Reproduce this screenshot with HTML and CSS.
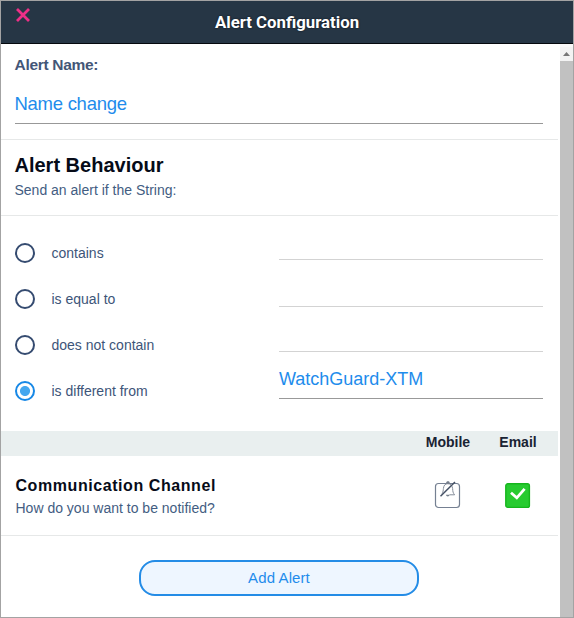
FILE: index.html
```html
<!DOCTYPE html>
<html lang="en">
<head>
<meta charset="utf-8">
<title>Alert Configuration</title>
<link rel="stylesheet" href="styles.css">
</head>
<body>
<div class="window">
  <header class="header">
    <svg class="close" width="14" height="14" viewBox="0 0 14 14"><path d="M1 1L13 13M13 1L1 13"/></svg>
    <h1 class="title">Alert Configuration</h1>
  </header>
  <div class="body">
    <main class="content">
      <section class="name">
        <div class="label">Alert Name:</div>
        <div class="field name-field">Name change</div>
      </section>
      <section class="behaviour">
        <h2 class="heading">Alert Behaviour</h2>
        <p class="sub">Send an alert if the String:</p>
      </section>
      <section class="options">
        <div class="option"><i class="radio"></i><span class="option-label">contains</span><div class="field option-field first"></div></div>
        <div class="option"><i class="radio"></i><span class="option-label">is equal to</span><div class="field option-field"></div></div>
        <div class="option"><i class="radio"></i><span class="option-label">does not contain</span><div class="field option-field short"></div></div>
        <div class="option"><i class="radio checked"></i><span class="option-label">is different from</span><div class="field option-field active">WatchGuard-XTM</div></div>
      </section>
      <div class="band"><span class="col">Mobile</span><span class="col">Email</span></div>
      <section class="channel">
        <div class="channel-text">
          <h3 class="channel-title">Communication Channel</h3>
          <p class="sub">How do you want to be notified?</p>
        </div>
        <svg class="mobile-box" width="28" height="30" viewBox="0 0 28 30">
          <rect class="box" x="1.5" y="4.5" width="24" height="24" rx="3"/>
          <path class="bell" d="M8 14.5C9.3 13 9.2 11 9.4 9.5C9.8 6.2 11.2 4.7 13.8 4.7S18.3 6.5 18.6 9.5C18.8 12.5 19 14 20.6 15.8H15.5"/>
          <path class="dot" d="M11.8 4.6Q12.2 2 14 2T16 4.6ZM11.8 15.8H15.8Q15.2 17.6 13.8 17.6T11.8 15.8Z"/>
          <path class="slash" d="M6.5 17.3L21 3"/>
        </svg>
        <svg class="email-box" width="26" height="26" viewBox="0 0 26 26">
          <rect x=".8" y=".8" width="23.6" height="23.6" rx="2"/>
          <path d="M6 9.8L11.8 14.8L19.6 5.8"/>
        </svg>
      </section>
      <div class="actions"><button class="add">Add Alert</button></div>
    </main>
    <div class="scrollbar"><div class="arrow"><svg width="7" height="4" viewBox="0 0 7 4"><path d="M0 4L3.5 0L7 4Z"/></svg></div><div class="thumb"></div></div>
  </div>
</div>
</body>
</html>
```

FILE: styles.css
```css
* { box-sizing: border-box; margin: 0; padding: 0; }
body { width: 574px; height: 618px; overflow: hidden; background: #fff; font-family: "Liberation Sans", Arial, sans-serif; font-size: 14px; color: #3d5579; }
span, h1, h2, h3, p { white-space: nowrap; }
.window { height: 618px; border: 1px solid #a3a3a3; display: flex; flex-direction: column; }
.header { height: 43px; flex: none; background: #263645; border-bottom: 1px solid #05090d; position: relative; display: flex; justify-content: center; }
.close { position: absolute; left: 15px; top: 7px; fill: none; stroke: #ee2f87; stroke-width: 2.8; }
.title { font: 700 16.8px/42px Roboto, sans-serif; color: #fff; text-shadow: 0 0 2px #0a1018; }
.body { flex: 1; display: flex; justify-content: space-between; min-height: 0; }
.content { width: 557px; }
.name { height: 96px; padding: 10px 15px 0 13.5px; border-bottom: 1px solid #e6e8e8; }
.label { font-weight: 700; font-size: 15.5px; line-height: 21px; height: 22px; color: #435677; letter-spacing: -.3px; }
.field { border-bottom: 1px solid #d3d3d3; color: #1e8cec; }
.name-field { height: 48px; padding-top: 17px; font-size: 18.5px; letter-spacing: -.27px; line-height: 22px; border-color: #989898; }
.behaviour { height: 76px; padding: 13px 14px 0 13.5px; border-bottom: 1px solid #e6e8e8; }
.heading { font-size: 20px; line-height: 24px; color: #060b18; }
.sub { font-size: 14px; line-height: 18px; margin-top: 4px; color: #435d82; }
.options { height: 215px; padding: 14px 15px 0 13.5px; }
.option { height: 46px; display: grid; grid-template-columns: 20px 244.5px 1fr; align-items: center; }
.radio { width: 20px; height: 20px; border: 2px solid #354b70; border-radius: 50%; }
.radio.checked { border-color: #1788e6; background: radial-gradient(circle, #44a7ef 0 4.6px, #fff 5.4px); }
.option-label { padding-left: 17px; line-height: 18px; margin-top: -1px; }
.option-field { height: 31px; align-self: start; }
.option-field.first { height: 30px; }
.option-field.short { height: 30px; }
.option-field.active { height: 31px; font-size: 18px; line-height: 22px; border-color: #999; }
.band { height: 25px; background: #e9efef; display: flex; justify-content: flex-end; padding-right: 5px; }
.col { width: 70px; text-align: center; font-weight: 700; line-height: 23px; color: #192333; }
.channel { height: 80px; display: flex; border-bottom: 1px solid #e6e8e8; }
.channel-text { width: 418px; padding: 20px 0 0 14.5px; }
.channel-title { font-size: 16px; line-height: 20px; color: #060b18; letter-spacing: .57px; }
.channel-text .sub { margin-top: 3px; }
.mobile-box { margin: 23px 0 0 15px; fill: none; stroke: #848c99; }
.mobile-box .box { stroke: #758092; stroke-width: 1.2; }
.mobile-box .dot { fill: #767f8c; stroke: none; }
.mobile-box .slash { stroke: #445064; stroke-width: 1.5; }
.email-box { margin: 27px 0 0 43px; }
.email-box rect { fill: #27cb30; stroke: #16b51d; stroke-width: 1.4; }
.email-box path { fill: none; stroke: #fff; stroke-width: 2.8; }
.actions { display: flex; justify-content: center; padding-top: 24px; }
.add { width: 280px; height: 36px; margin-right: 1px; border: 2px solid #248ce6; border-radius: 16px; background: #eef6ff; color: #1e8cec; font: 15px "Liberation Sans", Arial, sans-serif; padding-bottom: 1px; letter-spacing: .1px; }
.scrollbar { width: 13px; padding-top: 3px; display: flex; flex-direction: column; background: #f8f8f8; }
.arrow { height: 14px; display: flex; justify-content: center; align-items: center; background: #f3f3f3; }
.arrow path { fill: #777; }
.thumb { flex: 1; background: #c1c1c1; }
```
